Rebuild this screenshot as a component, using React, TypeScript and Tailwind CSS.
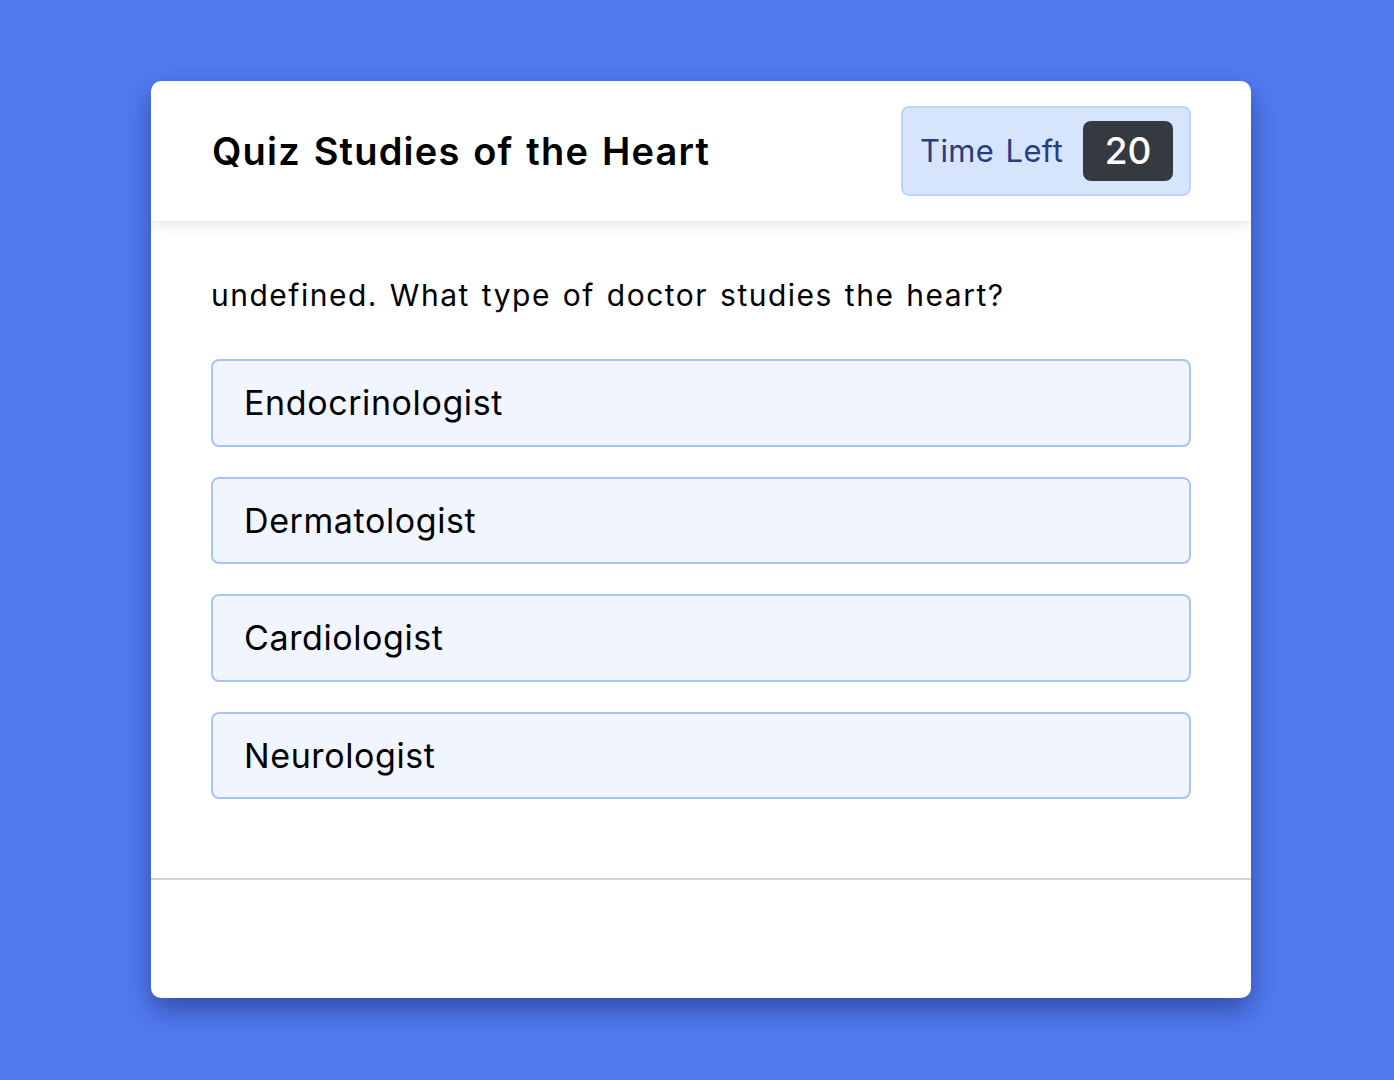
import React from "react";

const options = ["Endocrinologist", "Dermatologist", "Cardiologist", "Neurologist"];

export default function App() {
  return (
    <div
      className="min-h-[1080px] w-full bg-[#527bf2] flex pl-[151px] pt-[81px]"
      style={{ fontFamily: "Inter, 'Noto Sans', sans-serif" }}
    >
      <div className="w-[1100px] h-[917px] bg-white rounded-[10px] shadow-[0_12px_28px_rgba(20,30,90,0.5)] flex flex-col overflow-hidden">
        <div className="h-[140px] shrink-0 flex items-center justify-between pl-[61px] pr-[60px] shadow-[0_4px_12px_rgba(0,0,0,0.1)] relative z-10">
          <h1 className="text-[38px] font-semibold text-black tracking-[1.2px] [word-spacing:2px]">Quiz Studies of the Heart</h1>
          <div className="w-[290px] h-[90px] bg-[#d6e4fc] border-2 border-[#bcd4fb] rounded-[8px] flex items-center pl-[17px] pr-[16px] justify-between">
            <span className="text-[31px] text-[#283c80] tracking-[0.4px] [word-spacing:2px]">Time Left</span>
            <span className="w-[90px] h-[60px] bg-[#343a40] rounded-[8px] text-white text-[37px] font-medium flex items-center justify-center">20</span>
          </div>
        </div>
        <div className="flex-1 px-[60px] pt-[52px]">
          <p className="text-[30px] leading-[45px] text-black tracking-[1.5px] [word-spacing:2px]">undefined. What type of doctor studies the heart?</p>
          <div className="mt-[41px] flex flex-col gap-[30px]">
            {options.map((o) => (
              <div
                key={o}
                className="h-[87.5px] bg-[#f1f6fe] border-2 border-[#a6c5f7] rounded-[8px] flex items-center px-[31px] text-[34px] text-black tracking-[0.6px]"
              >
                {o}
              </div>
            ))}
          </div>
        </div>
        <div className="h-[120px] shrink-0 border-t-2 border-[#d3d3d3]" />
      </div>
    </div>
  );
}
